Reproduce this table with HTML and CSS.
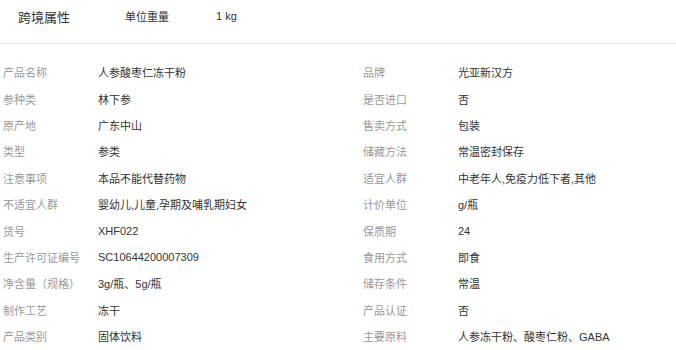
FILE: index.html
```html
<!DOCTYPE html>
<html lang="zh">
<head>
<meta charset="utf-8">
<link rel="stylesheet" href="styles.css">
</head>
<body>
<div class="head">
  <div class="head-title">跨境属性</div>
  <div class="head-label">单位重量</div>
  <div class="head-value">1 kg</div>
</div>
<div class="divider"></div>
<div class="attrs">
  <div class="row"><span class="k">产品名称</span><span class="v">人参酸枣仁冻干粉</span></div>
  <div class="row"><span class="k">品牌</span><span class="v">光亚新汉方</span></div>
  <div class="row"><span class="k">参种类</span><span class="v">林下参</span></div>
  <div class="row"><span class="k">是否进口</span><span class="v">否</span></div>
  <div class="row"><span class="k">原产地</span><span class="v">广东中山</span></div>
  <div class="row"><span class="k">售卖方式</span><span class="v">包装</span></div>
  <div class="row"><span class="k">类型</span><span class="v">参类</span></div>
  <div class="row"><span class="k">储藏方法</span><span class="v">常温密封保存</span></div>
  <div class="row"><span class="k">注意事项</span><span class="v">本品不能代替药物</span></div>
  <div class="row"><span class="k">适宜人群</span><span class="v">中老年人,免疫力低下者,其他</span></div>
  <div class="row"><span class="k">不适宜人群</span><span class="v">婴幼儿,儿童,孕期及哺乳期妇女</span></div>
  <div class="row"><span class="k">计价单位</span><span class="v">g/瓶</span></div>
  <div class="row"><span class="k">货号</span><span class="v">XHF022</span></div>
  <div class="row"><span class="k">保质期</span><span class="v">24</span></div>
  <div class="row"><span class="k">生产许可证编号</span><span class="v">SC10644200007309</span></div>
  <div class="row"><span class="k">食用方式</span><span class="v">即食</span></div>
  <div class="row"><span class="k">净含量（规格）</span><span class="v">3g/瓶、5g/瓶</span></div>
  <div class="row"><span class="k">储存条件</span><span class="v">常温</span></div>
  <div class="row"><span class="k">制作工艺</span><span class="v">冻干</span></div>
  <div class="row"><span class="k">产品认证</span><span class="v">否</span></div>
  <div class="row"><span class="k">产品类别</span><span class="v">固体饮料</span></div>
  <div class="row"><span class="k">主要原料</span><span class="v">人参冻干粉、酸枣仁粉、GABA</span></div>
</div>
</body>
</html>
```
FILE: styles.css
```css
html, body {
  margin: 0;
  padding: 0;
  background: #fff;
}
body {
  font-family: "Liberation Sans", "Noto Sans CJK SC", sans-serif;
  color: #333;
  font-size: 11px;
}
.head {
  display: flex;
  align-items: center;
  height: 32px;
  padding-left: 18px;
}
.head-title {
  font-size: 13px;
  color: #333;
  width: 107px;
}
.head-label {
  width: 91px;
  font-size: 11px;
  color: #333;
}
.head-value {
  font-size: 11px;
  color: #333;
}
.divider {
  height: 1px;
  background: #e8e8e8;
  margin-top: 11px;
}
.attrs {
  display: grid;
  grid-template-columns: 360px 1fr;
  padding: 15px 0 0 3px;
}
.row {
  display: flex;
  align-items: center;
  height: 26.4px;
  white-space: nowrap;
}
.k {
  width: 95px;
  flex: none;
  color: #999;
}
.v {
  color: #333;
}
```
